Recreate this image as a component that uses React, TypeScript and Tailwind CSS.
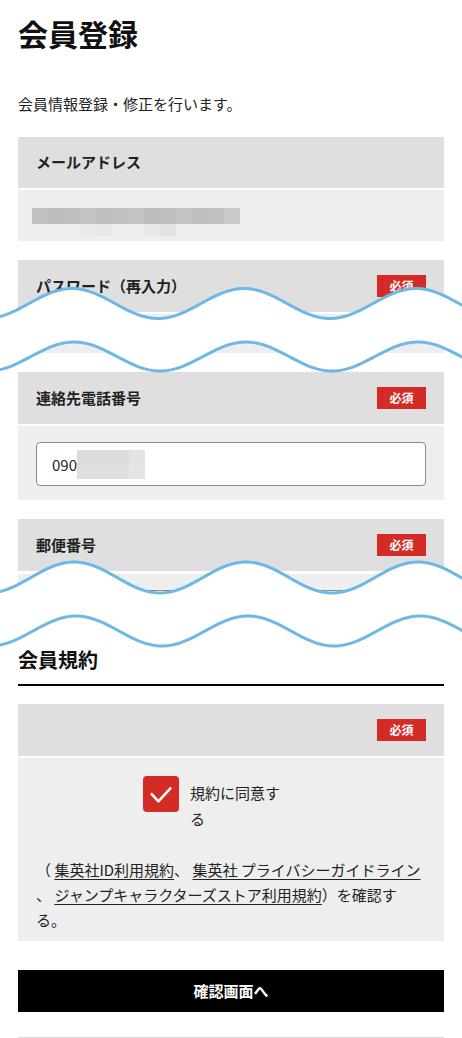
const FONT = "font-['Noto_Sans_CJK_JP','Noto_Sans',sans-serif]"

// pixelated blur blocks for the masked email
const MAIL_ROW = [
  'bg-[#c2c2c2]',
  'bg-[#bdbdbd]',
  'bg-[#bebebe]',
  'bg-[#c3c3c3]',
  'bg-[#bfbfbf]',
  'bg-[#c2c2c2]',
  'bg-[#c3c3c3]',
  'bg-[#bdbdbd]',
  'bg-[#bfbfbf]',
  'bg-[#c4c4c4]',
  'bg-[#bfbfbf]',
  'bg-[#c2c2c2]',
  'bg-[#c9c9c9]',
]
const MAIL_ROW2 = [
  'bg-transparent',
  'bg-transparent',
  'bg-transparent',
  'bg-[#e9e9e9]',
  'bg-[#e8e8e8]',
  'bg-transparent',
  'bg-transparent',
  'bg-[#e7e7e7]',
  'bg-[#e2e2e2]',
]

function Badge() {
  return (
    <span className="flex h-[22px] w-[49px] items-center justify-center bg-[#d42b27] text-[12px] font-bold leading-none text-white">
      必須
    </span>
  )
}

function FieldHeader({ label, required, h = 'h-[52px]' }: { label?: string; required?: boolean; h?: string }) {
  return (
    <div className={`flex ${h} items-center justify-between bg-[#dfdfdf] px-[18px]`}>
      <span className="text-[15px] font-bold text-[#222]">{label}</span>
      {required && <Badge />}
    </div>
  )
}

function wavePoints(cy: number, amp: number, x0: number, period: number) {
  const pts: string[] = []
  for (let x = -10; x <= 474; x += 2) {
    const y = cy - amp * Math.cos(((x - x0) / period) * Math.PI * 2)
    pts.push(`${x},${y.toFixed(2)}`)
  }
  return pts
}

// white strip between two wavy lines, marks a cut in the screenshot
function WaveCut({ top, bottom }: { top: [number, number, number]; bottom: [number, number, number] }) {
  const up = wavePoints(top[0], top[1], top[2], 172)
  const lo = wavePoints(bottom[0], bottom[1], bottom[2], 172)
  const fill = `M ${up.join(' L ')} L ${[...lo].reverse().join(' L ')} Z`
  return (
    <g>
      <path d={fill} fill="#ffffff" />
      <path d={`M ${up.join(' L ')}`} fill="none" stroke="#6db8e5" strokeWidth={3} />
      <path d={`M ${lo.join(' L ')}`} fill="none" stroke="#6db8e5" strokeWidth={3} />
    </g>
  )
}

export default function App() {
  return (
    <div className={`relative w-full bg-white px-[18px] text-[#222] ${FONT}`}>
      <h1 className="pt-[12px] text-[30px] font-bold leading-[42px] text-[#111]">会員登録</h1>
      <p className="mt-[38px] text-[15px] leading-[24px]">会員情報登録・修正を行います。</p>

      {/* メールアドレス */}
      <div className="mt-[21px]">
        <FieldHeader label="メールアドレス" h="h-[51px]" />
        <div className="mt-[2px] h-[51px] bg-[#eeeeee] pl-[14px] pt-[18px]">
          <div className="flex">
            {MAIL_ROW.map((c, i) => (
              <span key={i} className={`h-[16px] w-[16px] ${c}`} />
            ))}
          </div>
          <div className="flex">
            {MAIL_ROW2.map((c, i) => (
              <span key={i} className={`h-[12px] w-[16px] ${c}`} />
            ))}
          </div>
        </div>
      </div>

      {/* パスワード（再入力） */}
      <div className="mt-[19px]">
        <FieldHeader label="パスワード（再入力）" required />
        <div className="mt-[2px] h-[39px] bg-[#eeeeee]" />
      </div>

      {/* 連絡先電話番号 */}
      <div className="mt-[19px]">
        <FieldHeader label="連絡先電話番号" required />
        <div className="mt-[2px] bg-[#eeeeee] px-[18px] pb-[14px] pt-[16px]">
          <div className="flex h-[44px] items-center rounded-[4px] border border-[#8c8c8c] bg-white pl-[15px]">
            <span className="text-[15px] leading-none text-[#222]">090</span>
            <span className="grid grid-cols-[52px_16px] grid-rows-[15px_14px]">
              <span className="bg-[#dcdcdc]" />
              <span className="bg-[#e3e3e3]" />
              <span className="bg-[#dfdfdf]" />
              <span className="bg-[#e5e5e5]" />
            </span>
          </div>
        </div>
      </div>

      {/* 郵便番号 */}
      <div className="mt-[19px]">
        <FieldHeader label="郵便番号" required />
        <div className="mt-[3px] h-[40px] overflow-hidden bg-[#eeeeee] px-[18px] pt-[16px]">
          <div className="h-[44px] rounded-[4px] border border-[#8c8c8c] bg-white" />
        </div>
      </div>

      {/* 会員規約 */}
      <h2 className="mt-[31px] border-b-2 border-black pb-[9px] text-[20px] font-bold leading-[30px] text-[#111]">
        会員規約
      </h2>

      <div className="mt-[18px]">
        <FieldHeader required />
        <div className="mt-[2px] bg-[#eeeeee] pb-[9px] pt-[18px]">
          <div className="flex items-start gap-[11px] pl-[125px]">
            <span className="flex h-[36px] w-[36px] items-center justify-center rounded-[4px] bg-[#d42b27]">
              <svg width="36" height="36" viewBox="0 0 36 36" fill="none">
                <path
                  d="M8.7 18.2 L15.4 25.4 L27.4 12.4"
                  stroke="#ffffff"
                  strokeWidth={2.6}
                  strokeLinecap="round"
                  strokeLinejoin="round"
                />
              </svg>
            </span>
            <span className="mt-[4px] w-[96px] text-[15px] leading-[26px]">規約に同意する</span>
          </div>
          <p className="mt-[25px] px-[18px] text-[15px] leading-[25px] [text-spacing-trim:space-all]">
            （ <span className="underline underline-offset-[3px]">集英社ID利用規約</span>、{' '}
            <span className="underline underline-offset-[3px]">集英社 プライバシーガイドライン</span> 、{' '}
            <span className="underline underline-offset-[3px]">ジャンプキャラクターズストア利用規約</span>）を確認する。
          </p>
        </div>
      </div>

      <button
        type="button"
        className="mt-[29px] flex h-[42px] w-full items-center justify-center bg-black text-[15px] font-bold text-white"
      >
        確認画面へ
      </button>
      <div className="mt-[25px] h-px bg-[#dcdcdc]" />

      <svg
        className="pointer-events-none absolute left-0 top-0"
        width="462"
        height="1038"
        viewBox="0 0 462 1038"
      >
        <WaveCut top={[303.5, 15, 72]} bottom={[356.5, 14.5, 74]} />
        <WaveCut top={[577.5, 15.5, 74]} bottom={[631, 15, 76]} />
      </svg>
    </div>
  )
}
